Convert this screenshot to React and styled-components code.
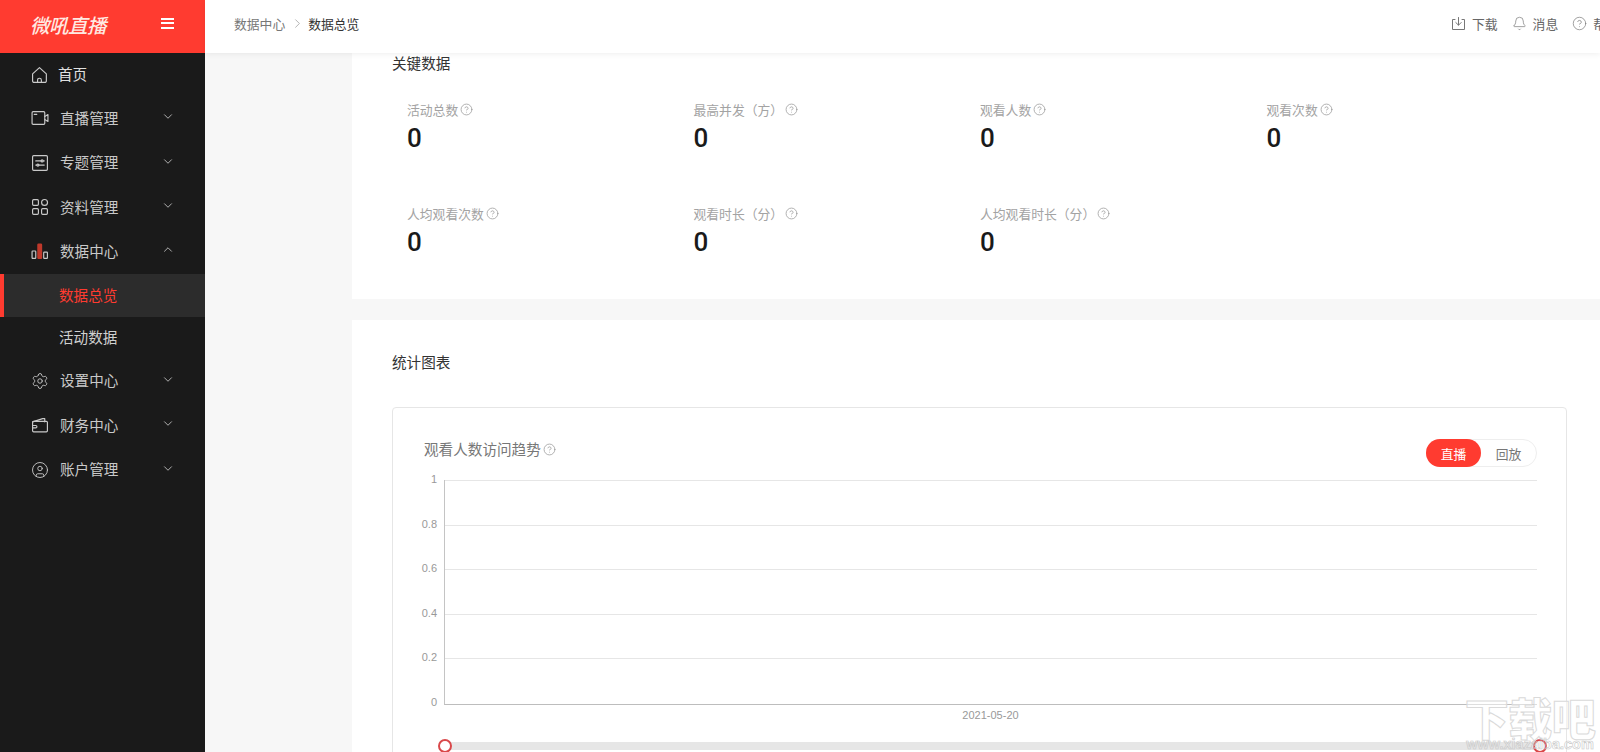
import React from 'react'
import styled, { createGlobalStyle } from 'styled-components'
import { ChevronDown, ChevronUp, ChevronRight, Settings, CircleUser, Bell, CircleHelp } from 'lucide-react'

const CJK = `"Noto Sans CJK SC", "Noto Sans", sans-serif`

const GlobalStyle = createGlobalStyle`
  html, body {
    margin: 0;
    height: 100%;
    overflow: hidden;
    background: #f7f7f7;
    font-family: ${CJK};
  }
  * { box-sizing: border-box; }
`

const Page = styled.div`
  width: 1600px;
  height: 752px;
  display: flex;
  overflow: hidden;
  position: relative;
`

const Sidebar = styled.aside`
  width: 205px;
  flex: none;
  background: #1a1a1a;
`

const Brand = styled.div`
  height: 53px;
  background: #ff3b30;
  display: flex;
  align-items: center;
  justify-content: space-between;
  padding: 0 31px 4px 30px;
  color: #fff;
`

const Logo = styled.div`
  font-size: 19.5px;
  font-weight: 500;
  font-style: italic;
  letter-spacing: -0.5px;
  color: #ffe9e2;
`

const Burger = styled.div`
  width: 13px;
  height: 11px;
  border-top: 2px solid #fff;
  border-bottom: 2px solid #fff;
  position: relative;
  margin-bottom: 3px;
  &::after {
    content: '';
    position: absolute;
    left: 0;
    right: 0;
    top: 2.5px;
    height: 2px;
    background: #fff;
  }
`

const Menu = styled.nav`
  display: flex;
  flex-direction: column;
`

const Row = styled.div`
  height: ${p => p.$home ? '43px' : '44.4px'};
  display: flex;
  align-items: center;
  padding-left: 31px;
  color: #c9c9c9;
  font-size: 14.6px;
  svg.lead {
    width: 18px;
    height: 18px;
    flex: none;
    margin-right: 11px;
    color: #c9c9c9;
  }
`

const RowLabel = styled.span`
  flex: 1;
  line-height: 1;
  color: ${p => p.$home ? '#e0e0e0' : '#c9c9c9'};
  margin-left: ${p => p.$home ? '-2px' : '0'};
`

const Caret = styled.span`
  width: 14px;
  margin-right: 30px;
  display: flex;
  justify-content: center;
  color: #c4c4c4;
  margin-top: -3px;
`

const SubRow = styled.div`
  height: ${p => p.$active ? '43px' : '42px'};
  display: flex;
  align-items: center;
  padding-left: ${p => p.$active ? '55px' : '59px'};
  font-size: 14.6px;
  line-height: 1;
  color: ${p => p.$active ? '#ff3b30' : '#d0d0d0'};
  background: ${p => p.$active ? '#2c2c2c' : 'transparent'};
  border-left: ${p => p.$active ? '4px solid #ff3b30' : '0'};
`

const Main = styled.div`
  flex: 1;
  min-width: 0;
  display: flex;
  flex-direction: column;
`

const TopBar = styled.header`
  height: 53px;
  flex: none;
  background: #fff;
  box-shadow: 0 1px 6px rgba(0, 0, 0, 0.07);
  display: flex;
  align-items: center;
  justify-content: space-between;
  padding: 0 0 6px 29px;
  position: relative;
  z-index: 1;
  overflow: hidden;
`

const Crumbs = styled.div`
  display: flex;
  align-items: center;
  font-size: 12.8px;
  color: #777;
  svg { margin: 0 3px 0 5px; color: #888; }
`

const CrumbNow = styled.span`
  color: #333;
`

const Tools = styled.div`
  display: flex;
  align-items: center;
  gap: 14px;
  width: 149px;
  flex: none;
  white-space: nowrap;
`

const Tool = styled.div`
  display: flex;
  align-items: center;
  gap: 6px;
  font-size: 12.8px;
  color: #666;
  svg { width: 15px; height: 15px; flex: none; color: #777; }
`

const Content = styled.main`
  flex: 1;
  min-height: 0;
  padding-left: 147px;
  display: flex;
  flex-direction: column;
  gap: 21px;
  overflow: hidden;
`

const Card = styled.section`
  flex: none;
  background: #fff;
  padding: 0 34px 0 40px;
`

const KeyCard = styled(Card)`
  height: 246px;
`

const SectionTitle = styled.h2`
  margin: 0;
  font-size: 14.6px;
  font-weight: 400;
  line-height: 20px;
  color: #333;
`

const StatGrid = styled.div`
  display: grid;
  grid-template-columns: repeat(4, 286.5px);
  grid-auto-rows: 104px;
  padding: 26px 0 0 15px;
`

const Stat = styled.div`
  display: flex;
  flex-direction: column;
`

const StatLabel = styled.div`
  display: flex;
  align-items: center;
  gap: 2px;
  height: 20px;
  font-size: 12.8px;
  color: #a3a3a3;
  svg { width: 13px; height: 13px; color: #999; stroke-width: 1.4; }
`

const StatValue = styled.div`
  font-family: Roboto, sans-serif;
  font-size: 26px;
  font-weight: 500;
  line-height: 38px;
  color: #1a1a1a;
`

const ChartCard = styled(Card)`
  height: 500px;
  padding-top: 32px;
`

const ChartBox = styled.div`
  margin-top: 35px;
  width: 1175px;
  height: 420px;
  border: 1px solid #e6e6e6;
  border-radius: 4px;
  padding: 27px 29px 0 0;
`

const ChartHead = styled.div`
  display: flex;
  align-items: flex-start;
  justify-content: space-between;
  padding-left: 31px;
  height: 45px;
`

const ChartTitle = styled.div`
  display: flex;
  align-items: center;
  gap: 2px;
  font-size: 14.6px;
  line-height: 28px;
  color: #777;
  svg { width: 13px; height: 13px; color: #999; stroke-width: 1.4; }
`

const Toggle = styled.div`
  display: flex;
  width: 111px;
  height: 28px;
  border: 1px solid #eee;
  border-radius: 14px;
  font-size: 12.8px;
  margin-top: 4px;
`

const ToggleItem = styled.div`
  width: 55px;
  margin: -1px 0 -1px ${p => p.$on ? '-1px' : '0'};
  display: flex;
  align-items: center;
  justify-content: center;
  border-radius: 14px;
  background: ${p => p.$on ? '#ff3b30' : 'transparent'};
  color: ${p => p.$on ? '#fff' : '#777'};
`

const Plot = styled.div`
  margin: 0 0 0 51px;
  width: 1093px;
  height: 225px;
  border-left: 1px solid #c4c4c4;
  border-bottom: 1px solid #bdbdbd;
  display: flex;
  flex-direction: column;
  justify-content: space-between;
`

const GridLine = styled.div`
  height: 1px;
  background: ${p => p.$last ? 'transparent' : '#e6e6e6'};
  position: relative;
`

const Tick = styled.span`
  position: absolute;
  right: calc(100% + 8px);
  top: -8px;
  font-family: "Liberation Sans", sans-serif;
  font-size: 11px;
  line-height: 14px;
  color: #999;
`

const DateLabel = styled.div`
  margin-left: 51px;
  width: 1093px;
  text-align: center;
  font-family: "Liberation Sans", sans-serif;
  font-size: 11px;
  line-height: 14px;
  padding-top: 3px;
  height: 37px;
  color: #999;
`

const Slider = styled.div`
  margin-left: 52px;
  width: 1095px;
  height: 8px;
  background: #e6e6e6;
  position: relative;
`

const Handle = styled.span`
  position: absolute;
  top: -3px;
  ${p => p.$end ? 'right: -7px;' : 'left: -7px;'}
  width: 14px;
  height: 14px;
  border-radius: 50%;
  border: 2px solid #d9484a;
  background: #fff;
`

// watermark of the download site, it lies over the page
const Watermark = styled.div`
  position: absolute;
  right: 3px;
  bottom: 0;
  width: 134px;
  display: flex;
  flex-direction: column;
  align-items: center;
  pointer-events: none;
  z-index: 2;
`

const WatermarkCn = styled.div`
  font-size: 44px;
  font-weight: 900;
  line-height: 44px;
  letter-spacing: -0.5px;
  white-space: nowrap;
  color: rgba(255, 255, 255, 0.5);
  -webkit-text-stroke: 1px #dadada;
`

const WatermarkEn = styled.div`
  font-family: "Liberation Sans", sans-serif;
  font-size: 14.5px;
  font-weight: 700;
  line-height: 16px;
  margin-top: -3px;
  white-space: nowrap;
  color: transparent;
  -webkit-text-stroke: 0.6px #c8c8c8;
`

const Icon = ({ children }) => (
  <svg className="lead" viewBox="0 0 17 17" fill="none" stroke="currentColor" strokeWidth="1.1" strokeLinejoin="round" strokeLinecap="round">
    {children}
  </svg>
)

const HomeIcon = () => (
  <Icon>
    <path d="M1.5 7.5 8 1.5l6.5 6v6.6a1.4 1.4 0 0 1-1.4 1.4H2.9a1.4 1.4 0 0 1-1.4-1.4z" />
    <path d="M6.2 15.4v-2a1.8 1.8 0 0 1 3.6 0v2" />
  </Icon>
)

const VideoIcon = () => (
  <Icon>
    <rect x="1" y="2.5" width="12" height="12" rx="1" />
    <path d="M3 5h2.5M13 7l3-1.8v6.6L13 10" />
  </Icon>
)

const TopicIcon = () => (
  <Icon>
    <rect x="1.5" y="1.5" width="14" height="14" rx="1" />
    <path d="M4.5 6.5h5M11.5 6.5h1M4.5 10.5h1M7.5 10.5h5" />
    <circle cx="10.5" cy="6.5" r="1" />
    <circle cx="6.5" cy="10.5" r="1" />
  </Icon>
)

const FilesIcon = () => (
  <Icon>
    <rect x="1.5" y="1.5" width="5.5" height="5.5" rx="1" />
    <circle cx="12.8" cy="4.2" r="2.8" />
    <rect x="1.5" y="10" width="5.5" height="5.5" rx="1" />
    <rect x="10" y="10" width="5.5" height="5.5" rx="1" />
  </Icon>
)

const ChartIcon = () => (
  <Icon>
    <rect x="1" y="8.5" width="3.5" height="7" rx="0.6" />
    <rect x="6.5" y="2" width="3.5" height="13.5" rx="0.6" fill="#c0392b" stroke="#c0392b" />
    <rect x="12" y="9.5" width="3.5" height="6" rx="0.6" />
  </Icon>
)

const WalletIcon = () => (
  <Icon>
    <path d="M1.5 5.5 11 2.5h2v3" />
    <rect x="1.5" y="5" width="14" height="10" rx="1" />
    <path d="M1.5 9h3a1 1 0 0 1 0 2.2h-3" />
  </Icon>
)

const DownloadIcon = () => (
  <svg viewBox="0 0 15 15" fill="none" stroke="currentColor" strokeWidth="1" strokeLinejoin="round" strokeLinecap="round">
    <path d="M4 3.5H1.5v10h12v-10H11" />
    <path d="M7.5 1.5v7.5M4.8 6.5l2.7 2.7 2.7-2.7" />
  </svg>
)

const menuTop = [
  { label: '直播管理', icon: <VideoIcon /> },
  { label: '专题管理', icon: <TopicIcon /> },
  { label: '资料管理', icon: <FilesIcon /> },
]

const menuBottom = [
  { label: '设置中心', icon: <Settings strokeWidth={1.2} className="lead" /> },
  { label: '财务中心', icon: <WalletIcon /> },
  { label: '账户管理', icon: <CircleUser strokeWidth={1.2} className="lead" /> },
]

const stats = [
  { label: '活动总数' },
  { label: '最高并发（方）' },
  { label: '观看人数' },
  { label: '观看次数' },
  { label: '人均观看次数' },
  { label: '观看时长（分）' },
  { label: '人均观看时长（分）' },
]

const ticks = ['1', '0.8', '0.6', '0.4', '0.2', '0']

const MenuRow = ({ item, open }) => (
  <Row>
    {item.icon}
    <RowLabel>{item.label}</RowLabel>
    <Caret>{open ? <ChevronUp size={15} strokeWidth={1.5} /> : <ChevronDown size={15} strokeWidth={1.5} />}</Caret>
  </Row>
)

const App = () => {
  return (
    <Page>
      <GlobalStyle />
      <Sidebar>
        <Brand>
          <Logo>微吼直播</Logo>
          <Burger />
        </Brand>
        <Menu>
          <Row $home>
            <HomeIcon />
            <RowLabel $home>首页</RowLabel>
          </Row>
          {menuTop.map(item => <MenuRow key={item.label} item={item} />)}
          <MenuRow item={{ label: '数据中心', icon: <ChartIcon /> }} open />
          <SubRow $active>数据总览</SubRow>
          <SubRow>活动数据</SubRow>
          {menuBottom.map(item => <MenuRow key={item.label} item={item} />)}
        </Menu>
      </Sidebar>

      <Main>
        <TopBar>
          <Crumbs>
            <span>数据中心</span>
            <ChevronRight size={15} strokeWidth={1} />
            <CrumbNow>数据总览</CrumbNow>
          </Crumbs>
          <Tools>
            <Tool><DownloadIcon />下载</Tool>
            <Tool><Bell strokeWidth={1.1} />消息</Tool>
            <Tool><CircleHelp strokeWidth={1.1} />帮助</Tool>
          </Tools>
        </TopBar>

        <Content>
          <KeyCard>
            <SectionTitle>关键数据</SectionTitle>
            <StatGrid>
              {stats.map(s => (
                <Stat key={s.label}>
                  <StatLabel>{s.label}<CircleHelp /></StatLabel>
                  <StatValue>0</StatValue>
                </Stat>
              ))}
            </StatGrid>
          </KeyCard>

          <ChartCard>
            <SectionTitle>统计图表</SectionTitle>
            <ChartBox>
              <ChartHead>
                <ChartTitle>观看人数访问趋势<CircleHelp /></ChartTitle>
                <Toggle>
                  <ToggleItem $on>直播</ToggleItem>
                  <ToggleItem>回放</ToggleItem>
                </Toggle>
              </ChartHead>
              <Plot>
                {ticks.map((t, i) => (
                  <GridLine key={t} $last={i === ticks.length - 1}><Tick>{t}</Tick></GridLine>
                ))}
              </Plot>
              <DateLabel>2021-05-20</DateLabel>
              <Slider>
                <Handle />
                <Handle $end />
              </Slider>
            </ChartBox>
          </ChartCard>
        </Content>
      </Main>

      <Watermark>
        <WatermarkCn>下载吧</WatermarkCn>
        <WatermarkEn>www.xiazaiba.com</WatermarkEn>
      </Watermark>
    </Page>
  )
}

export default App
